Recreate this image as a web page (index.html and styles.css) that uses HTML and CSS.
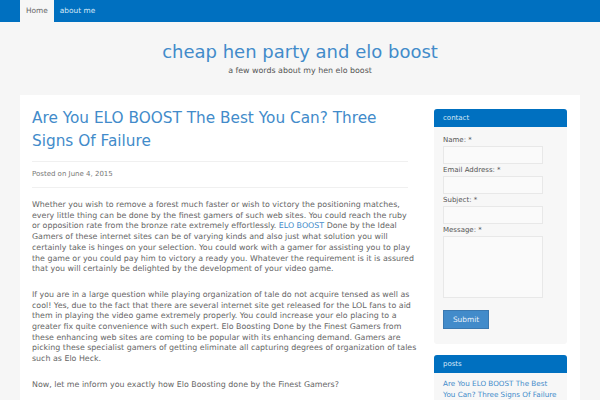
FILE: index.html
```html
<!DOCTYPE html>
<html lang="en">
<head>
    <meta charset="UTF-8">
    <meta name="viewport" content="width=device-width, initial-scale=1.0">
    <title>cheap hen party and elo boost</title>
    <link rel="stylesheet" href="styles.css">
</head>
<body>

    <nav class="topnav">
        <ul>
            <li class="current"><a href="#">Home</a></li>
            <li><a href="#">about me</a></li>
        </ul>
    </nav>

    <header class="site-head">
        <h1 class="site-title">cheap hen party and elo boost</h1>
        <p class="site-desc">a few words about my hen elo boost</p>
    </header>

    <div class="page">
        <main class="content">
            <article>
                <h2 class="entry-title">Are You ELO BOOST The Best You Can? Three Signs Of Failure</h2>
                <div class="entry-meta">Posted on June 4, 2015</div>
                <div class="entry-body">
                    <p>Whether you wish to remove a forest much faster or wish to victory the positioning matches, every little thing can be done by the finest gamers of such web sites. You could reach the ruby or opposition rate from the bronze rate extremely effortlessly. <a href="#">ELO BOOST</a> Done by the Ideal Gamers of these internet sites can be of varying kinds and also just what solution you will certainly take is hinges on your selection. You could work with a gamer for assisting you to play the game or you could pay him to victory a ready you. Whatever the requirement is it is assured that you will certainly be delighted by the development of your video game.</p>
                    <p>If you are in a large question while playing organization of tale do not acquire tensed as well as cool! Yes, due to the fact that there are several internet site get released for the LOL fans to aid them in playing the video game extremely properly. You could increase your elo placing to a greater fix quite convenience with such expert. Elo Boosting Done by the Finest Gamers from these enhancing web sites are coming to be popular with its enhancing demand. Gamers are picking these specialist gamers of getting eliminate all capturing degrees of organization of tales such as Elo Heck.</p>
                    <p>Now, let me inform you exactly how Elo Boosting done by the Finest Gamers?</p>
                </div>
            </article>
        </main>

        <aside class="sidebar">
            <section class="widget">
                <h3 class="widget-title">contact</h3>
                <form class="contact-form">
                    <label>Name: *</label>
                    <input type="text">
                    <label>Email Address: *</label>
                    <input type="text">
                    <label>Subject: *</label>
                    <input type="text">
                    <label>Message: *</label>
                    <textarea></textarea>
                    <button type="button">Submit</button>
                </form>
            </section>
            <section class="widget">
                <h3 class="widget-title">posts</h3>
                <ul class="post-list">
                    <li><a href="#">Are You ELO BOOST The Best You Can? Three Signs Of Failure</a></li>
                </ul>
            </section>
        </aside>
    </div>

</body>
</html>
```

FILE: styles.css
```css
body {
    margin: 0;
    background: #f6f6f6;
    font-family: "DejaVu Sans", Verdana, sans-serif;
    color: #666;
}
a {
    color: #428bca;
    text-decoration: none;
}

/* top menu */
.topnav {
    background: #0070c0;
    height: 22px;
}
.topnav ul {
    list-style: none;
    margin: 0;
    padding: 0 0 0 20px;
    display: flex;
}
.topnav li a {
    display: block;
    padding: 0 6px;
    line-height: 22px;
    font-size: 7.4px;
    color: #d6e8f7;
}
.topnav li.current a {
    background: #f6f6f6;
    color: #666;
}

/* site header */
.site-head {
    text-align: center;
    height: 73px;
}
.site-title {
    margin: 0;
    padding-top: 17px;
    font-size: 18px;
    font-weight: normal;
    line-height: 25px;
    color: #428bca;
}
.site-desc {
    margin: 2px 0 0;
    font-size: 7.9px;
    color: #555;
}

/* page body */
.page {
    margin: 0 20px;
    background: #fff;
    display: flex;
    align-items: flex-start;
    padding: 12px 13px 0 12px;
}
.content {
    width: 385px;
    flex-shrink: 0;
}
.sidebar {
    margin-left: 17px;
    width: 133px;
    padding-top: 2px;
}

.entry-title {
    margin: 0;
    font-size: 15.3px;
    font-weight: normal;
    line-height: 23px;
    color: #428bca;
}
.entry-meta {
    margin: 8px 9px 0 0;
    border-top: 1px solid #f0f0f0;
    border-bottom: 1px solid #f0f0f0;
    padding: 7px 0;
    font-size: 7px;
    line-height: 11px;
    color: #777;
}
.entry-body {
    padding-top: 12px;
    font-size: 7.9px;
    line-height: 10.7px;
}
.entry-body p {
    margin: 0 0 15px;
}

/* sidebar widgets */
.widget {
    background: #f7f7f7;
    border-radius: 3px;
    margin-bottom: 11px;
}
.widget-title {
    margin: 0;
    background: #0070c0;
    color: #d6e8f7;
    font-size: 7px;
    font-weight: normal;
    line-height: 18px;
    padding: 0 9px;
    border-radius: 3px 3px 0 0;
}
.contact-form {
    display: flex;
    flex-direction: column;
    align-items: flex-start;
    padding: 8px 9px 15px;
}
.contact-form label {
    font-size: 7px;
    line-height: 11px;
    color: #555;
}
.contact-form input,
.contact-form textarea {
    box-sizing: border-box;
    width: 100px;
    height: 18px;
    border: 1px solid #e8e8e8;
    background: #fafafa;
    margin: 0 0 1px;
    padding: 0;
}
.contact-form textarea {
    height: 62px;
    resize: none;
}
.contact-form button {
    margin-top: 11px;
    width: 46px;
    height: 19px;
    background: #428bca;
    border: 1px solid #3a78b0;
    color: #e8f1fa;
    font-family: inherit;
    font-size: 7.4px;
    padding: 0;
}
.post-list {
    list-style: none;
    margin: 0;
    padding: 5px 9px;
    font-size: 7.2px;
    line-height: 11px;
}
```
